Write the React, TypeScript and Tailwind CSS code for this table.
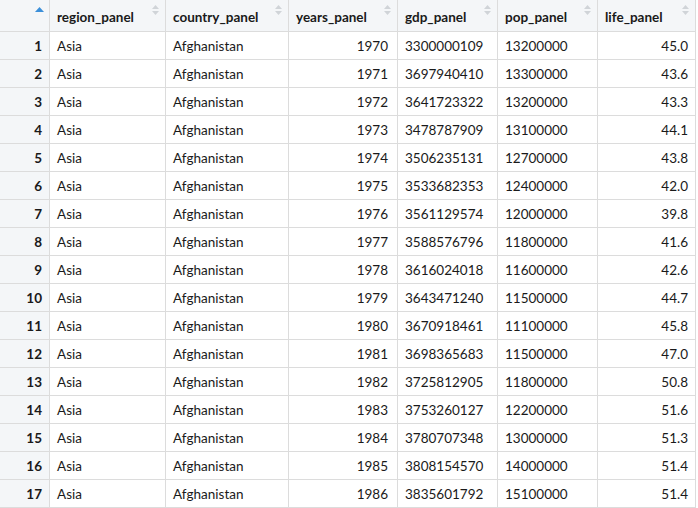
import React from 'react';

const rows: [string, string, number, string, string, string][] = [
  ['Asia', 'Afghanistan', 1970, '3300000109', '13200000', '45.0'],
  ['Asia', 'Afghanistan', 1971, '3697940410', '13300000', '43.6'],
  ['Asia', 'Afghanistan', 1972, '3641723322', '13200000', '43.3'],
  ['Asia', 'Afghanistan', 1973, '3478787909', '13100000', '44.1'],
  ['Asia', 'Afghanistan', 1974, '3506235131', '12700000', '43.8'],
  ['Asia', 'Afghanistan', 1975, '3533682353', '12400000', '42.0'],
  ['Asia', 'Afghanistan', 1976, '3561129574', '12000000', '39.8'],
  ['Asia', 'Afghanistan', 1977, '3588576796', '11800000', '41.6'],
  ['Asia', 'Afghanistan', 1978, '3616024018', '11600000', '42.6'],
  ['Asia', 'Afghanistan', 1979, '3643471240', '11500000', '44.7'],
  ['Asia', 'Afghanistan', 1980, '3670918461', '11100000', '45.8'],
  ['Asia', 'Afghanistan', 1981, '3698365683', '11500000', '47.0'],
  ['Asia', 'Afghanistan', 1982, '3725812905', '11800000', '50.8'],
  ['Asia', 'Afghanistan', 1983, '3753260127', '12200000', '51.6'],
  ['Asia', 'Afghanistan', 1984, '3780707348', '13000000', '51.3'],
  ['Asia', 'Afghanistan', 1985, '3808154570', '14000000', '51.4'],
  ['Asia', 'Afghanistan', 1986, '3835601792', '15100000', '51.4'],
];

const headers = ['region_panel', 'country_panel', 'years_panel', 'gdp_panel', 'pop_panel', 'life_panel'];

function SortIcon({ active }: { active?: boolean }) {
  if (active) {
    return (
      <svg width="9" height="6" viewBox="0 0 9 6" className="absolute right-[5px] top-[7px]">
        <path d="M4.5 0 L9 5 L0 5 Z" fill="#3b8fd9" />
      </svg>
    );
  }
  return (
    <svg width="7" height="11" viewBox="0 0 7 11" className="absolute right-[6px] top-[5px]">
      <path d="M3.5 0 L7 4 L0 4 Z" fill="#d0d4d8" />
      <path d="M0 6 L7 6 L3.5 10 Z" fill="#d0d4d8" />
    </svg>
  );
}

export default function App() {
  const cell = 'h-[28px] border-r border-b border-[#dcdcdc] flex items-center px-[7px] pt-[2px] whitespace-nowrap overflow-hidden';
  return (
    <div className="w-[698px] h-[508px] overflow-hidden bg-white text-[13.5px] text-[#1a1a1a]" style={{ fontFamily: 'Lato, "Open Sans", sans-serif' }}>
      <div className="grid grid-cols-[50px_116px_123px_109px_100px_100px_98px]">
        <div className="relative h-[32px] border-r border-b border-[#dcdcdc] bg-[#f4f6f8]">
          <SortIcon active />
        </div>
        {headers.map((h) => (
          <div key={h} className="relative h-[32px] border-r border-b border-[#dcdcdc] bg-[#f4f6f8] flex items-center px-[7px] font-bold pt-[3px]">
            {h}
            <SortIcon />
          </div>
        ))}
        {rows.map((r, i) => (
          <React.Fragment key={i}>
            <div className={`${cell} justify-end bg-[#f4f6f8] font-bold`}>{i + 1}</div>
            <div className={cell}>{r[0]}</div>
            <div className={cell}>{r[1]}</div>
            <div className={`${cell} justify-end pr-[9px]`}>{r[2]}</div>
            <div className={cell}>{r[3]}</div>
            <div className={cell}>{r[4]}</div>
            <div className={`${cell} justify-end`}>{r[5]}</div>
          </React.Fragment>
        ))}
      </div>
    </div>
  );
}
